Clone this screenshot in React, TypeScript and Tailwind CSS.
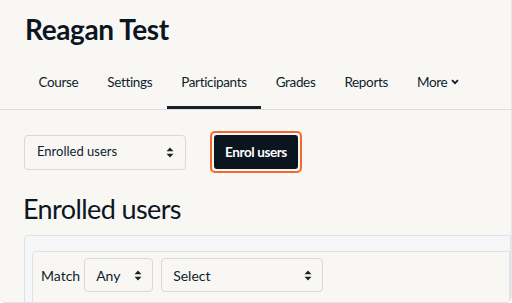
import React from "react";

const Arrows = () => (
  <svg width="8" height="11" viewBox="0 0 8 11" fill="#1d2125">
    <path d="M4 0.5 L7.5 4.3 L0.5 4.3 Z" />
    <path d="M4 10.5 L7.5 6.7 L0.5 6.7 Z" />
  </svg>
);

export default function App() {
  const font = { fontFamily: "Lato, 'Noto Sans', sans-serif" };
  return (
    <div
      className="w-[512px] h-[303px] overflow-hidden bg-[#f8f7f4] text-[#0f1d2e] border-r border-b border-[#e6e6ea] rounded-b-md"
      style={font}
    >
      <div className="pl-[25px] pt-[12px]">
        <h1 className="text-[28px] leading-[34px] font-bold tracking-[-0.4px] text-[#0c1622]">Reagan Test</h1>
      </div>
      <nav className="mt-[10px] flex items-stretch border-b border-[#dcdde0] h-[54px] pl-[24px] text-[13.5px] tracking-[-0.35px]">
        {["Course", "Settings", "Participants", "Grades", "Reports"].map((t) => (
          <div
            key={t}
            className={
              t === "Participants"
                ? "px-[14.5px] flex items-center border-b-[3px] border-[#1a1f2b] pt-[2px]"
                : "px-[14.5px] flex items-center border-b-[3px] border-transparent pt-[2px]"
            }
          >
            {t}
          </div>
        ))}
        <div className="px-[14.5px] flex items-center gap-[4px] border-b-[3px] border-transparent pt-[2px]">
          More
          <svg width="8" height="6" viewBox="0 0 8 6">
            <path d="M1 1.2 L4 4.2 L7 1.2" stroke="#0f1d2e" strokeWidth="1.8" fill="none" />
          </svg>
        </div>
      </nav>
      <div className="flex items-center mt-[21px] pl-[24px] gap-[24px]">
        <div className="w-[162px] h-[35px] border border-[#d6d8dc] rounded-[4px] flex items-center justify-between pl-[12px] pr-[11px] text-[13px]">
          Enrolled users
          <Arrows />
        </div>
        <div className="p-[2px] border-2 border-[#f26a2d] rounded-[5px]">
          <div className="w-[84px] h-[34px] bg-[#0b1520] rounded-[3px] text-white flex items-center justify-center text-[13.5px] font-bold tracking-[-0.4px]">
            Enrol users
          </div>
        </div>
      </div>
      <h2 className="pl-[23px] mt-[19px] text-[27px] leading-[34px] font-normal tracking-[-0.6px] text-[#0c1622]">
        Enrolled users
      </h2>
      <div className="ml-[24px] mt-[9px] border border-[#dfe1e5] bg-[#f5f6f8] rounded-tl-[4px] pl-[7px] pt-[15px] h-[80px]">
        <div className="border border-[#dfe1e5] bg-[#f8f7f4] rounded-tl-[4px] h-[60px] flex items-start pt-[6px] pl-[8px] text-[14px]">
          <div className="h-[34px] flex items-center mr-[4px]">Match</div>
          <div className="w-[69px] h-[34px] border border-[#d6d8dc] rounded-[4px] flex items-center justify-between pl-[11px] pr-[10px]">
            Any
            <Arrows />
          </div>
          <div className="ml-[8px] w-[162px] h-[34px] border border-[#d6d8dc] rounded-[4px] flex items-center justify-between pl-[11px] pr-[10px]">
            Select
            <Arrows />
          </div>
        </div>
      </div>
    </div>
  );
}
